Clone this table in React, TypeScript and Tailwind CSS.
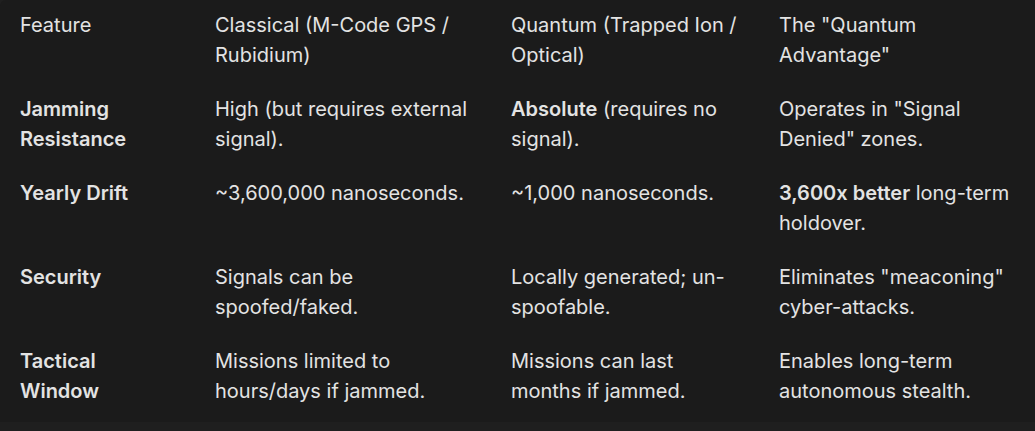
const ROWS = [
  {
    feature: "Feature",
    head: true,
    classical: <>Classical (M-Code GPS / Rubidium)</>,
    quantum: <>Quantum (Trapped Ion / Optical)</>,
    advantage: <>The "Quantum Advantage"</>,
  },
  {
    feature: "Jamming Resistance",
    classical: <>High (but requires external signal).</>,
    quantum: (
      <>
        <strong className="font-semibold">Absolute</strong> (requires no signal).
      </>
    ),
    advantage: <>Operates in "Signal Denied" zones.</>,
  },
  {
    feature: "Yearly Drift",
    classical: <>~3,600,000 nanoseconds.</>,
    quantum: <>~1,000 nanoseconds.</>,
    advantage: (
      <>
        <strong className="font-semibold">3,600x better</strong> long-term holdover.
      </>
    ),
  },
  {
    feature: "Security",
    classical: <>Signals can be spoofed/faked.</>,
    quantum: <>Locally generated; un-spoofable.</>,
    advantage: <>Eliminates "meaconing" cyber-attacks.</>,
  },
  {
    feature: "Tactical Window",
    classical: <>Missions limited to hours/days if jammed.</>,
    quantum: <>Missions can last months if jammed.</>,
    advantage: <>Enables long-term autonomous stealth.</>,
  },
];

export default function App() {
  return (
    <div
      className="h-[431px] w-[1035px] overflow-hidden bg-[#1f1f1f] text-[20px] leading-[30px] text-[#e3e3e3]"
      style={{ fontFamily: "Inter, Roboto, sans-serif" }}
    >
      <div className="h-[422px] rounded-tl-md bg-[#1b1b1b] pt-[10px] pl-5">
        {ROWS.map((row) => (
          <div
            key={row.feature}
            className="grid grid-cols-[195px_296px_268px_1fr] pb-6"
          >
            <div className={row.head ? "pr-[45px]" : "pr-[45px] font-semibold"}>
              {row.feature}
            </div>
            <div className="pr-[34px]">{row.classical}</div>
            <div className="pr-[38px]">{row.quantum}</div>
            <div className="pr-4">{row.advantage}</div>
          </div>
        ))}
      </div>
    </div>
  );
}
